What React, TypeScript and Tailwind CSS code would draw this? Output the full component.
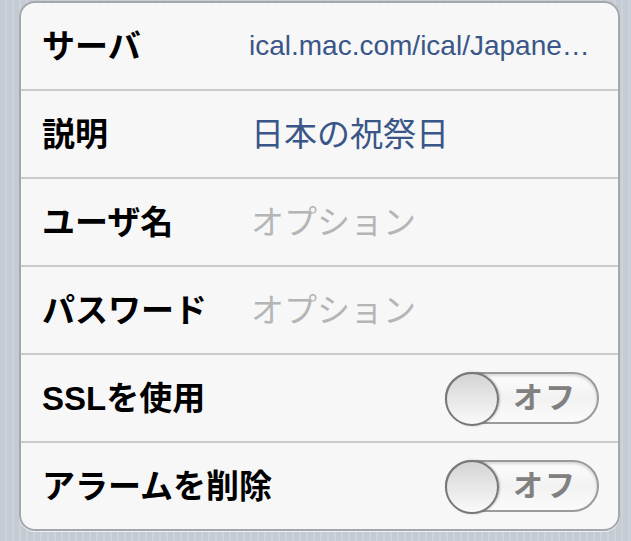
import React from 'react';

type Row = {
  label: string;
  value?: string;
  kind: 'value' | 'placeholder' | 'toggle';
  small?: boolean;
};

const rows: Row[] = [
  { label: 'サーバ', value: 'ical.mac.com/ical/Japane…', kind: 'value', small: true },
  { label: '説明', value: '日本の祝祭日', kind: 'value' },
  { label: 'ユーザ名', value: 'オプション', kind: 'placeholder' },
  { label: 'パスワード', value: 'オプション', kind: 'placeholder' },
  { label: 'SSLを使用', kind: 'toggle' },
  { label: 'アラームを削除', kind: 'toggle' },
];

const font = { fontFamily: '"Liberation Sans", "Noto Sans CJK JP", sans-serif' };

const Toggle: React.FC = () => (
  <div className="relative w-[154px] h-[52px] rounded-full border-2 border-[#9a9a9a] bg-gradient-to-b from-[#fdfdfd] via-[#f2f2f2] to-[#fbfbfb] shadow-[inset_0_2px_3px_rgba(0,0,0,0.15)] flex items-center justify-end pr-[20px]">
    <span className="text-[30px] font-bold text-[#808080] leading-none tracking-[2px]">オフ</span>
    <div className="absolute -left-[2px] -top-[2px] w-[54px] h-[54px] rounded-full border-2 border-[#777] bg-gradient-to-b from-[#d4d4d4] to-[#fafafa] shadow-[1px_0_2px_rgba(0,0,0,0.25)]" />
  </div>
);

const App: React.FC = () => {
  return (
    <div
      className="w-[631px] h-[541px] overflow-hidden pl-[19px] pr-[11px] pt-[1px] bg-[repeating-linear-gradient(90deg,#c4cbd3_0px,#c4cbd3_5px,#cdd3da_5px,#cdd3da_7px)]"
      style={font}
    >
      <div className="w-[601px] rounded-[16px] border-2 border-[#a4a8ae] bg-[#f7f7f7] overflow-hidden shadow-[0_1px_0_#eef1f4]">
        {rows.map((r, i) => (
          <div
            key={r.label}
            className={`flex items-center ${i === 0 ? 'h-[86px]' : 'h-[88px] border-t-2 border-[#cbcbcb]'} pl-[21px] pr-[19px]`}
          >
            <div className="w-[208px] shrink-0 text-[33px] font-bold text-black leading-none whitespace-nowrap">{r.label}</div>
            {r.kind === 'toggle' ? (
              <div className="flex-1 flex justify-end">
                <Toggle />
              </div>
            ) : (
              <div
                className={`flex-1 whitespace-nowrap leading-none ${
                  r.kind === 'placeholder' ? 'text-[#b5b5b5]' : 'text-[#3a5688]'
                } ${r.small ? 'text-[28px] -ml-[1px]' : 'text-[33px] pl-[1px]'}`}
              >
                {r.value}
              </div>
            )}
          </div>
        ))}
      </div>
    </div>
  );
};

export default App;
